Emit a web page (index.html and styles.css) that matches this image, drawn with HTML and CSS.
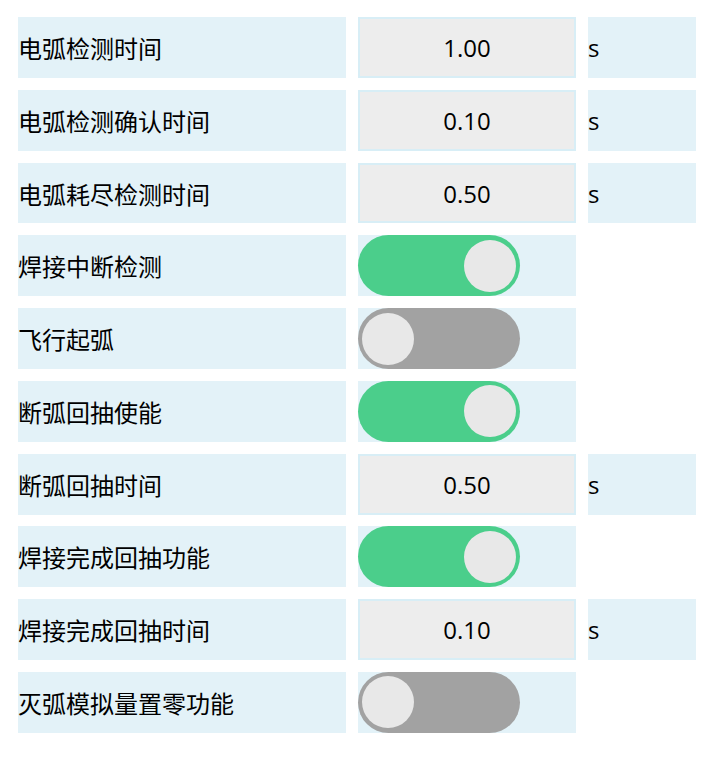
FILE: index.html
```html
<!DOCTYPE html>
<html lang="zh-CN">
<head>
<meta charset="utf-8">
<title>电弧参数</title>
<link rel="stylesheet" href="styles.css">
</head>
<body>
<div class="params">
  <div class="row">
    <div class="name">电弧检测时间</div>
    <div class="value"><input class="num" type="text" value="1.00"></div>
    <div class="unit">s</div>
  </div>
  <div class="row">
    <div class="name">电弧检测确认时间</div>
    <div class="value"><input class="num" type="text" value="0.10"></div>
    <div class="unit">s</div>
  </div>
  <div class="row">
    <div class="name">电弧耗尽检测时间</div>
    <div class="value"><input class="num" type="text" value="0.50"></div>
    <div class="unit">s</div>
  </div>
  <div class="row">
    <div class="name">焊接中断检测</div>
    <div class="value"><span class="switch on"><span class="knob"></span></span></div>
  </div>
  <div class="row">
    <div class="name">飞行起弧</div>
    <div class="value"><span class="switch"><span class="knob"></span></span></div>
  </div>
  <div class="row">
    <div class="name">断弧回抽使能</div>
    <div class="value"><span class="switch on"><span class="knob"></span></span></div>
  </div>
  <div class="row">
    <div class="name">断弧回抽时间</div>
    <div class="value"><input class="num" type="text" value="0.50"></div>
    <div class="unit">s</div>
  </div>
  <div class="row">
    <div class="name">焊接完成回抽功能</div>
    <div class="value"><span class="switch on"><span class="knob"></span></span></div>
  </div>
  <div class="row">
    <div class="name">焊接完成回抽时间</div>
    <div class="value"><input class="num" type="text" value="0.10"></div>
    <div class="unit">s</div>
  </div>
  <div class="row">
    <div class="name">灭弧模拟量置零功能</div>
    <div class="value"><span class="switch"><span class="knob"></span></span></div>
  </div>
</div>
</body>
</html>
```

FILE: styles.css
```css
html, body {
  margin: 0;
  padding: 0;
  background: #ffffff;
}

body {
  font-family: "Open Sans", "Noto Sans CJK SC", sans-serif;
  font-size: 24px;
  color: #000000;
}

.params {
  display: flex;
  flex-direction: column;
  gap: 11.9px;
  padding: 17px 0 0 18px;
}

.row {
  display: grid;
  grid-template-columns: 328px 218px 108px;
  column-gap: 12px;
  height: 60.9px;
}

.name,
.unit {
  background: #e3f2f8;
  display: flex;
  align-items: center;
  white-space: nowrap;
}

.name {
  font-family: "Noto Sans CJK SC", sans-serif;
}

.value {
  background: #e3f2f8;
  display: flex;
  align-items: stretch;
}

.num {
  box-sizing: border-box;
  width: 100%;
  height: 100%;
  margin: 0;
  padding: 0;
  border: 2px solid #d8eef6;
  background: #ededed;
  font: inherit;
  color: #000000;
  text-align: center;
  outline: none;
}

/* on/off switch */
.switch {
  box-sizing: border-box;
  width: 162px;
  height: 100%;
  border-radius: 31px;
  padding: 4px;
  background: #a2a2a2;
  display: flex;
  align-items: center;
  justify-content: flex-start;
}

.switch.on {
  background: #4bce8b;
  justify-content: flex-end;
}

.knob {
  width: 52px;
  height: 52px;
  border-radius: 50%;
  background: #e8e8e8;
}
```
